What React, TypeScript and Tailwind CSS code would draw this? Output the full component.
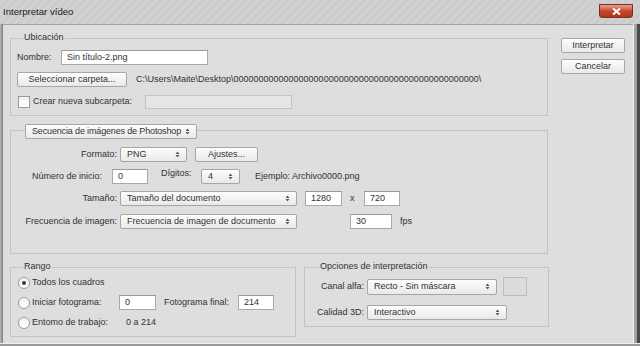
import clsx from "clsx";

const txt = "text-[#303236]";

function Arrows() {
  return (
    <svg width="5" height="7" viewBox="0 0 5 7" className="shrink-0">
      <path d="M0.5 3 L2.5 0.5 L4.5 3 Z M0.5 4 L2.5 6.5 L4.5 4 Z" fill="#5a5a5a" />
    </svg>
  );
}

function Select({ value, className }: { value: string; className?: string }) {
  return (
    <div
      className={clsx(
        "flex h-[15px] shrink-0 items-center justify-between rounded-[2px] border border-[#a6a6a6] bg-gradient-to-b from-[#fdfdfd] to-[#e9e9e9] pl-[6px] pr-[6px]",
        className
      )}
    >
      <span className="whitespace-nowrap leading-none">{value}</span>
      <Arrows />
    </div>
  );
}

function Input({ value, className }: { value?: string; className?: string }) {
  return (
    <div
      className={clsx(
        "flex h-[15px] shrink-0 items-center border border-[#a9a9a9] border-t-[#9a9a9a] bg-white pl-[5px] leading-none",
        className
      )}
    >
      {value}
    </div>
  );
}

function Button({ children, className }: { children: React.ReactNode; className?: string }) {
  return (
    <div
      className={clsx(
        "flex h-[15px] shrink-0 items-center justify-center rounded-[2px] border border-[#a6a6a6] bg-gradient-to-b from-[#fdfdfd] to-[#e9e9e9] leading-none",
        className
      )}
    >
      {children}
    </div>
  );
}

function Radio({ checked }: { checked?: boolean }) {
  return (
    <div className="flex h-[12px] w-[12px] shrink-0 items-center justify-center rounded-full border border-[#9a9a9a] bg-gradient-to-b from-[#f4f4f4] to-white">
      {checked && <div className="h-[4px] w-[4px] rounded-full bg-[#3a3a3a]" />}
    </div>
  );
}

function Group({
  legend,
  className,
  children,
}: {
  legend: React.ReactNode;
  className?: string;
  children: React.ReactNode;
}) {
  return (
    <div className={clsx("relative shrink-0 border border-[#c3c3c3]", className)}>
      {legend}
      {children}
    </div>
  );
}

export default function App() {
  const zeros = "0".repeat(49);
  return (
    <div
      className={clsx(
        "flex h-[346px] w-[640px] flex-col overflow-hidden bg-[#8a8a8a] font-['Liberation_Sans',Arial,sans-serif] text-[9px]",
        txt
      )}
    >
      {/* title bar */}
      <div className="flex h-[24px] shrink-0 items-start bg-[repeating-linear-gradient(135deg,#cbcbcb_0px,#d3d3d3_3px,#c9c9c9_6px)]">
        <span className="pl-[3px] pt-[6px] text-[9.6px] leading-[11px] text-[#1c1c1c]">Interpretar vídeo</span>
        <div className="ml-auto mr-[7px] mt-[4px] flex h-[14px] w-[34px] items-center justify-center rounded-b-[3px] border border-[#7a2a20] bg-gradient-to-b from-[#e8a08c] via-[#c8452e] to-[#b23420]">
          <svg width="9" height="7" viewBox="0 0 9 7">
            <path d="M1 0.5 L8 6.5 M8 0.5 L1 6.5" stroke="white" strokeWidth="2" />
          </svg>
        </div>
      </div>

      <div className="flex flex-1">
        <div className="w-[3px] bg-gradient-to-r from-[#b9b9b9] to-[#7d7d7d]" />
        {/* client area */}
        <div className="flex flex-1 gap-[13px] border-t border-[#a4a4a4] bg-[#dedede] pl-[7px] pt-[13px]">
          <div className="flex w-[538px] flex-col">
            {/* Ubicación */}
            <Group
              className="flex h-[78px] flex-col gap-[7px] pl-[6px] pt-[11px]"
              legend={
                <span className="absolute -top-[7px] left-[12px] bg-[#dedede] px-[1px] leading-[11px]">
                  Ubicación
                </span>
              }
            >
              <div className="flex h-[15px] items-center">
                <span className="w-[44px]">Nombre:</span>
                <Input value="Sin título-2.png" className="w-[147px]" />
              </div>
              <div className="flex h-[15px] items-center">
                <Button className="w-[110px]">Seleccionar carpeta...</Button>
                <span className="ml-[9px] whitespace-nowrap">C:\Users\Maite\Desktop\{zeros}\</span>
              </div>
              <div className="flex h-[15px] items-center">
                <div className="ml-[1px] h-[12px] w-[12px] shrink-0 border border-[#999] bg-gradient-to-b from-[#f0f0f0] to-white" />
                <span className="ml-[3px] w-[112px]">Crear nueva subcarpeta:</span>
                <div className="h-[14px] w-[147px] border border-[#c2c2c2] bg-[#e6e6e6]" />
              </div>
            </Group>

            {/* Secuencia */}
            <Group
              className="mt-[14px] flex h-[124px] flex-col pt-[16px]"
              legend={
                <Select
                  value="Secuencia de imágenes de Photoshop"
                  className="absolute -top-[7px] left-[14px] h-[14px] w-[172px] pl-[5px] pr-[5px] tracking-[-0.15px]"
                />
              }
            >
              <div className="flex h-[15px] items-center">
                <span className="w-[106px] text-right">Formato:</span>
                <Select value="PNG" className="ml-[3px] w-[67px]" />
                <Button className="ml-[8px] w-[63px]">Ajustes...</Button>
              </div>
              <div className="mt-[7px] flex h-[15px] items-center">
                <span className="ml-[21px] w-[80px]">Número de inicio:</span>
                <Input value="0" className="w-[36px]" />
                <span className="mb-[6px] ml-[13px] w-[40px]">Dígitos:</span>
                <Select value="4" className="w-[39px]" />
                <span className="ml-[15px]">Ejemplo: Archivo0000.png</span>
              </div>
              <div className="mt-[7px] flex h-[15px] items-center">
                <span className="w-[106px] text-right">Tamaño:</span>
                <Select value="Tamaño del documento" className="ml-[3px] w-[177px]" />
                <Input value="1280" className="ml-[8px] w-[37px]" />
                <span className="w-[22px] pl-[8px]">x</span>
                <Input value="720" className="w-[36px]" />
              </div>
              <div className="mt-[8px] flex h-[15px] items-center">
                <span className="w-[106px] text-right">Frecuencia de imagen:</span>
                <Select value="Frecuencia de imagen de documento" className="ml-[3px] w-[177px]" />
                <Input value="30" className="ml-[53px] w-[42px]" />
                <span className="ml-[8px]">fps</span>
              </div>
            </Group>

            <div className="mt-[13px] flex items-start">
              {/* Rango */}
              <Group
                className="flex h-[70px] w-[286px] flex-col pl-[7px] pt-[7px]"
                legend={
                  <span className="absolute -top-[7px] left-[12px] bg-[#dedede] px-[1px] leading-[11px]">
                    Rango
                  </span>
                }
              >
                <div className="flex h-[15px] items-center">
                  <Radio checked />
                  <span className="ml-[2px]">Todos los cuadros</span>
                </div>
                <div className="mt-[5px] flex h-[15px] items-center">
                  <Radio />
                  <span className="ml-[2px] w-[87px]">Iniciar fotograma:</span>
                  <Input value="0" className="w-[37px]" />
                  <span className="ml-[8px] w-[74px]">Fotograma final:</span>
                  <Input value="214" className="w-[36px]" />
                </div>
                <div className="mt-[5px] flex h-[15px] items-center">
                  <Radio />
                  <span className="ml-[2px] w-[94px]">Entomo de trabajo:</span>
                  <span>0 a 214</span>
                </div>
              </Group>

              {/* Opciones */}
              <Group
                className="ml-[8px] flex h-[60px] w-[245px] flex-col pt-[9px]"
                legend={
                  <span className="absolute -top-[7px] left-[14px] bg-[#dedede] px-[1px] leading-[11px]">
                    Opciones de interpretación
                  </span>
                }
              >
                <div className="flex h-[19px] items-center">
                  <span className="w-[59px] text-right">Canal alfa:</span>
                  <Select value="Recto - Sin máscara" className="ml-[3px] h-[16px] w-[130px] border-[#8294ad]" />
                  <div className="ml-[6px] h-[19px] w-[24px] border border-[#bdbdbd] bg-[#dcdcdc]" />
                </div>
                <div className="mt-[9px] flex h-[15px] items-center">
                  <span className="w-[59px] text-right">Calidad 3D:</span>
                  <Select value="Interactivo" className="ml-[3px] w-[140px]" />
                </div>
              </Group>
            </div>
          </div>

          {/* buttons */}
          <div className="flex w-[64px] flex-col gap-[6px]">
            <Button className="border-[#6f6f6f]">Interpretar</Button>
            <Button>Cancelar</Button>
          </div>
        </div>
        <div className="flex w-[7px]">
          <div className="w-[1px] bg-[#f2f2f2]" />
          <div className="w-[3px] bg-[#a2a2a2]" />
          <div className="w-[3px] bg-[#4a4a4a]" />
        </div>
      </div>
      <div className="h-[3px] shrink-0 border-t border-[#f0f0f0] bg-[#9a9a9a]" />
    </div>
  );
}
